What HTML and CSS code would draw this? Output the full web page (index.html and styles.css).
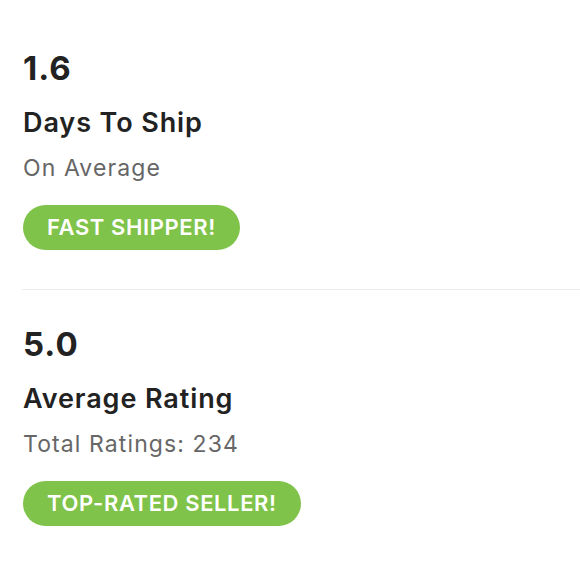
FILE: index.html
```html
<!DOCTYPE html>
<html>
<head>
<meta charset="utf-8">
<link rel="stylesheet" href="styles.css">
</head>
<body>
<div class="stats">
  <section class="stat">
    <div class="value">1.6</div>
    <div class="label">Days To Ship</div>
    <div class="sub">On Average</div>
    <span class="badge">FAST SHIPPER!</span>
  </section>
  <section class="stat">
    <div class="value">5.0</div>
    <div class="label">Average Rating</div>
    <div class="sub">Total Ratings: 234</div>
    <span class="badge">TOP-RATED SELLER!</span>
  </section>
</div>
</body>
</html>
```
FILE: styles.css
```css
html, body {
  margin: 0;
  padding: 0;
  background: #ffffff;
}
body {
  font-family: Inter, "Open Sans", sans-serif;
  color: #222222;
}
.stats {
  padding-left: 22px;
  padding-top: 48px;
}
.stat {
  display: flex;
  flex-direction: column;
  align-items: flex-start;
  padding-left: 1px;
  padding-bottom: 39px;
}
.stat + .stat {
  border-top: 1px solid #ececec;
  padding-top: 34px;
}
.value {
  font-size: 33px;
  font-weight: 700;
  line-height: 40px;
  letter-spacing: 1px;
}
.label {
  font-size: 27px;
  font-weight: 600;
  line-height: 34px;
  margin-top: 18px;
  letter-spacing: 0.9px;
}
.sub {
  font-size: 23px;
  font-weight: 400;
  color: #666666;
  line-height: 30px;
  margin-top: 13px;
  letter-spacing: 1.1px;
}
.badge {
  margin-top: 22px;
  background: #80c34a;
  color: #ffffff;
  font-size: 22px;
  font-weight: 600;
  height: 45px;
  line-height: 45px;
  padding: 0 24px;
  border-radius: 23px;
  letter-spacing: 0.6px;
}
```
